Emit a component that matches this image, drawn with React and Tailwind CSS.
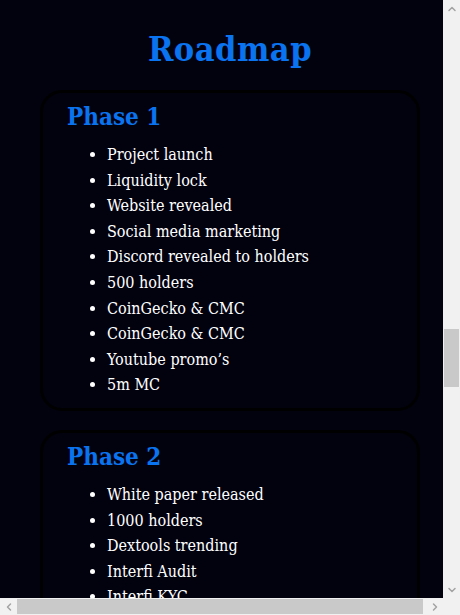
import { ChevronUp, ChevronDown, ChevronLeft, ChevronRight } from 'lucide-react'

const PHASES = [
  {
    title: 'Phase 1',
    items: [
      'Project launch',
      'Liquidity lock',
      'Website revealed',
      'Social media marketing',
      'Discord revealed to holders',
      '500 holders',
      'CoinGecko & CMC',
      'CoinGecko & CMC',
      'Youtube promo’s',
      '5m MC',
    ],
  },
  {
    title: 'Phase 2',
    items: [
      'White paper released',
      '1000 holders',
      'Dextools trending',
      'Interfi Audit',
      'Interfi KYC',
    ],
  },
]

const FONT = { fontFamily: '"DejaVu Serif Condensed", "DejaVu Serif", serif' }

function PhaseCard({ phase }) {
  return (
    <div className="rounded-[22px] border-[3px] border-black bg-[#02020f] px-6 pt-2 pb-[10px]">
      <h3 className="text-[24px] font-bold leading-[32px] text-[#0a74f0]">{phase.title}</h3>
      <ul className="mt-[9px] list-disc pl-10 text-[16px] leading-[25.6px] text-white">
        {phase.items.map((it, i) => (
          <li key={i}>{it}</li>
        ))}
      </ul>
    </div>
  )
}

export default function App() {
  return (
    <div className="flex h-[615px] w-[460px] flex-col overflow-hidden bg-[#02020f]" style={FONT}>
      <div className="flex min-h-0 flex-1">
        <div className="min-w-0 flex-1 overflow-hidden">
          <div className="w-[460px] pt-[29px]">
            <h2 className="text-center text-[34px] font-bold leading-[40px] tracking-[0.5px] text-[#0a74f0]">
              Roadmap
            </h2>
            <div className="mx-10 mt-[21px] flex flex-col gap-[19px]">
              {PHASES.map((p) => (
                <PhaseCard key={p.title} phase={p} />
              ))}
            </div>
          </div>
        </div>

        {/* vertical scrollbar */}
        <div className="flex w-[17px] flex-col bg-[#f1f1f1]">
          <div className="flex h-[17px] items-center justify-center text-[#a3a3a3]">
            <ChevronUp size={12} strokeWidth={3} />
          </div>
          <div className="flex-1 pt-[312px]">
            <div className="mx-[1px] h-[58px] bg-[#c9c9c9]" />
          </div>
          <div className="flex h-[17px] items-center justify-center text-[#a3a3a3]">
            <ChevronDown size={12} strokeWidth={3} />
          </div>
        </div>
      </div>

      {/* horizontal scrollbar */}
      <div className="flex h-[17px] bg-[#f1f1f1]">
        <div className="flex w-[17px] items-center justify-center text-[#a3a3a3]">
          <ChevronLeft size={12} strokeWidth={3} />
        </div>
        <div className="flex flex-1 items-center pr-[3px]">
          <div className="h-[15px] w-full bg-[#c9c9c9]" />
        </div>
        <div className="flex w-[17px] items-center justify-center text-[#a3a3a3]">
          <ChevronRight size={12} strokeWidth={3} />
        </div>
        <div className="w-[17px] bg-[#f1f1f1]" />
      </div>
    </div>
  )
}
